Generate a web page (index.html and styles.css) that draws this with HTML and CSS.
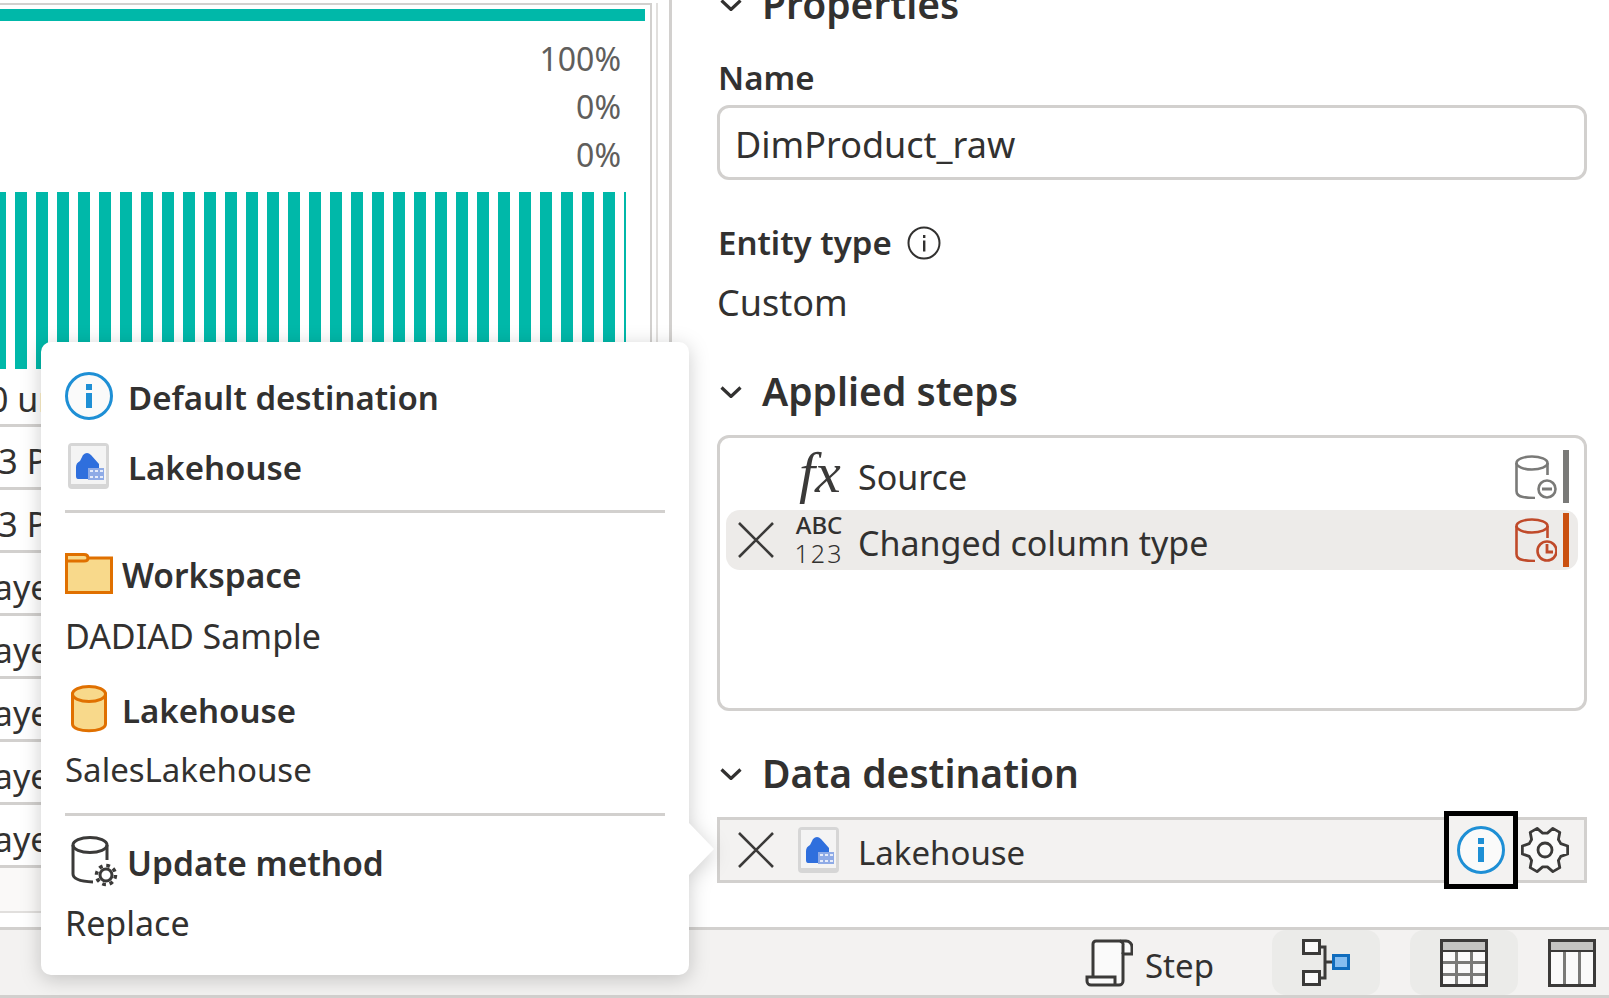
FILE: index.html
```html
<!DOCTYPE html>
<html lang="en">
<head>
    <meta charset="UTF-8">
    <meta name="viewport" content="width=device-width, initial-scale=1.0">
    <title>DimProduct_raw - Power Query</title>
    <link rel="stylesheet" href="styles.css">
</head>
<body>
    <svg class="icon-defs" xmlns="http://www.w3.org/2000/svg">
        <symbol id="i-lakehouse" viewBox="0 0 41 46">
            <rect x="0" y="0" width="41" height="46" rx="4" fill="#d6d6d6"/>
            <rect x="3" y="3" width="35" height="38" fill="#f4f4f4"/>
            <path d="M8 24 Q8 20 12 18 L15 12 Q19 8 23 12 L31 21 V36 H10 Q8 36 8 33 Z" fill="#2f6fdd"/>
            <rect x="20" y="25" width="16" height="12" fill="#8fabe6"/>
            <path d="M22 28h3M27 28h3M32 28h3M22 34h3M27 34h3M32 34h3" stroke="#e6ecfa" stroke-width="2"/>
        </symbol>
        <symbol id="i-info" viewBox="0 0 48 48">
            <circle cx="24" cy="24" r="22.5" fill="#fafafa" stroke="#1e8fd5" stroke-width="3"/>
            <rect x="21" y="12" width="6" height="6" fill="#1e8fd5"/>
            <rect x="21" y="21" width="6" height="15" fill="#1e8fd5"/>
        </symbol>
        <symbol id="i-cross" viewBox="0 0 36 36">
            <path d="M1 1 L35 35 M35 1 L1 35" stroke="#3b3a39" stroke-width="2.6" fill="none"/>
        </symbol>
        <symbol id="i-chevron" viewBox="0 0 22 12">
            <path d="M1.5 1.5 L11 10.5 L20.5 1.5" stroke="#323130" stroke-width="3.2" fill="none"/>
        </symbol>
    </svg>

    <main class="workspace">
        <section class="preview">
            <div class="column">
                <div class="quality-bar"></div>
                <ul class="stats">
                    <li>100%</li>
                    <li>0%</li>
                    <li>0%</li>
                </ul>
                <div class="stripes"></div>
                <div class="cell cell-units">100 unique</div>
                <div class="cell cell-time">2023 PM</div>
                <div class="cell cell-time">2023 PM</div>
                <div class="cell cell-layer">Layer</div>
                <div class="cell cell-layer">Layer</div>
                <div class="cell cell-layer">Layer</div>
                <div class="cell cell-layer">Layer</div>
                <div class="cell cell-layer">Layer</div>
                <div class="cell-spacer"></div>
            </div>
        </section>

        <aside class="settings">
            <h2 class="section-title section-title-first">
                <svg class="chevron"><use href="#i-chevron"/></svg>Properties
            </h2>
            <div class="field-label">Name</div>
            <div class="name-input">DimProduct_raw</div>
            <div class="field-label field-label-entity">
                Entity type
                <svg class="hint" viewBox="0 0 34 34">
                    <circle cx="17" cy="17" r="15.5" fill="none" stroke="#323130" stroke-width="2"/>
                    <rect x="16" y="9" width="2.4" height="3" fill="#323130"/>
                    <rect x="16" y="14.5" width="2.4" height="11" fill="#323130"/>
                </svg>
            </div>
            <div class="field-value">Custom</div>

            <h2 class="section-title">
                <svg class="chevron"><use href="#i-chevron"/></svg>Applied steps
            </h2>
            <div class="steps">
                <div class="step step-source">
                    <span class="step-cross"></span>
                    <span class="step-fx">fx</span>
                    <span class="step-name">Source</span>
                    <svg class="step-state" viewBox="0 0 42 44">
                        <g fill="none" stroke="#7a7a78" stroke-width="2.6">
                            <ellipse cx="17" cy="8" rx="15.5" ry="6.5"/>
                            <path d="M1.5 8 V36 Q1.5 41 8 42 Q13 43 20 43 M32.5 8 V20"/>
                            <circle cx="32" cy="34" r="8.5"/>
                        </g>
                        <rect x="27" y="32.5" width="10" height="3" fill="#7a7a78"/>
                    </svg>
                    <span class="step-flag"></span>
                </div>
                <div class="step step-selected">
                    <svg class="step-cross"><use href="#i-cross"/></svg>
                    <span class="step-type"><b>ABC</b><i>123</i></span>
                    <span class="step-name">Changed column type</span>
                    <svg class="step-state" viewBox="0 0 42 44">
                        <g fill="none" stroke="#c04a2a" stroke-width="2.6">
                            <ellipse cx="17" cy="8" rx="15.5" ry="6.5"/>
                            <path d="M1.5 8 V36 Q1.5 41 8 42 Q13 43 20 43 M32.5 8 V20"/>
                            <circle cx="32" cy="33" r="9.5"/>
                            <path d="M32 26 V34 H38" stroke-width="2.8"/>
                        </g>
                    </svg>
                    <span class="step-flag step-flag-warn"></span>
                </div>
            </div>

            <h2 class="section-title section-title-dest">
                <svg class="chevron"><use href="#i-chevron"/></svg>Data destination
            </h2>
            <div class="destination">
                <svg class="step-cross"><use href="#i-cross"/></svg>
                <svg class="dest-lakehouse"><use href="#i-lakehouse"/></svg>
                <span class="dest-name">Lakehouse</span>
                <button class="dest-info"><svg class="dest-info-icon"><use href="#i-info"/></svg></button>
                <svg class="dest-gear" viewBox="0 0 48 48">
                    <path d="M39.76 17.63 46.65 20.01 46.65 27.99 39.76 30.37 37.4 34.47 38.78 41.62 31.87 45.61 26.37 40.83 21.63 40.83 16.13 45.61 9.22 41.62 10.6 34.47 8.24 30.37 1.35 27.99 1.35 20.01 8.24 17.63 10.6 13.53 9.22 6.38 16.13 2.39 21.63 7.17 26.37 7.17 31.87 2.39 38.78 6.38 37.4 13.53Z" fill="#fafafa" stroke="#3b3a39" stroke-width="2.8" stroke-linejoin="round"/>
                    <circle cx="24" cy="24" r="7" fill="none" stroke="#3b3a39" stroke-width="2.8"/>
                </svg>
            </div>
        </aside>
    </main>

    <footer class="status-bar">
        <svg class="status-icon" viewBox="0 0 48 48">
            <path d="M8 38 V5 a3 3 0 0 1 3-3 H41 a6 6 0 0 1 6 6 V15 H38 V42 a4 4 0 0 1 -4 4 H6 a4 4 0 0 1 -4 -4 V38 H30 V46" fill="#fafafa" stroke="#3b3a39" stroke-width="3"/>
            <path d="M38 15 V7 a4 4 0 0 0 -3-5" fill="none" stroke="#3b3a39" stroke-width="3"/>
        </svg>
        <span class="status-step">Step</span>
        <span class="toggle toggle-diagram">
            <svg class="status-icon" viewBox="0 0 48 48">
                <path d="M17 8 H23 V39 H17 M23 23 H31" fill="none" stroke="#3b3a39" stroke-width="3"/>
                <rect x="1.5" y="1.5" width="16" height="13" fill="#fafafa" stroke="#3b3a39" stroke-width="3"/>
                <rect x="1.5" y="32.5" width="16" height="13" fill="#fafafa" stroke="#3b3a39" stroke-width="3"/>
                <rect x="31.5" y="16.5" width="15" height="13" fill="#85bdf0" stroke="#0f6cbd" stroke-width="3"/>
            </svg>
        </span>
        <span class="toggle toggle-table">
            <svg class="status-icon" viewBox="0 0 48 48">
                <rect x="1.5" y="1.5" width="45" height="45" fill="#fafafa"/>
                <rect x="1.5" y="1.5" width="45" height="10" fill="#c4c4c2"/>
                <path d="M1.5 23.5 H46.5 M1.5 35.5 H46.5 M16.5 12 V46 M31.5 12 V46" stroke="#7a7a78" stroke-width="3"/>
                <path d="M1.5 12 H46.5" stroke="#3b3a39" stroke-width="2"/>
                <rect x="1.5" y="1.5" width="45" height="45" fill="none" stroke="#3b3a39" stroke-width="3"/>
            </svg>
        </span>
        <svg class="status-icon status-columns" viewBox="0 0 48 48">
            <rect x="1.5" y="1.5" width="45" height="45" fill="#fafafa"/>
            <rect x="1.5" y="1.5" width="45" height="10" fill="#c4c4c2"/>
            <path d="M16.5 12 V46 M31.5 12 V46" stroke="#7a7a78" stroke-width="3"/>
            <path d="M1.5 12 H46.5" stroke="#3b3a39" stroke-width="2"/>
            <rect x="1.5" y="1.5" width="45" height="45" fill="none" stroke="#3b3a39" stroke-width="3"/>
        </svg>
    </footer>

    <div class="popover">
        <div class="pop-row pop-row-default">
            <svg class="pop-info"><use href="#i-info"/></svg>
            <span class="pop-title">Default destination</span>
        </div>
        <div class="pop-row pop-row-kind">
            <svg class="pop-lakehouse"><use href="#i-lakehouse"/></svg>
            <span class="pop-title">Lakehouse</span>
        </div>
        <hr class="pop-rule pop-rule-first">
        <div class="pop-row">
            <svg class="pop-folder" viewBox="0 0 48 41">
                <path d="M1.5 5 H46.5 V39.5 H1.5 Z" fill="#f8d98b" stroke="#e07000" stroke-width="3"/>
                <path d="M1.5 8 V1.5 H19 Q23 1.5 23 5 Q23 8 19 8 Z" fill="#f8d98b" stroke="#e07000" stroke-width="3"/>
            </svg>
            <span class="pop-title pop-title-workspace">Workspace</span>
        </div>
        <div class="pop-value pop-value-workspace">DADIAD Sample</div>
        <div class="pop-row pop-row-lake">
            <svg class="pop-cylinder" viewBox="0 0 36 48">
                <path d="M1.5 9 V39 C1.5 48 34.5 48 34.5 39 V9 Z" fill="#f8d98b" stroke="#e07000" stroke-width="3"/>
                <ellipse cx="18" cy="9" rx="16.5" ry="7.5" fill="#f8d98b" stroke="#e07000" stroke-width="3"/>
            </svg>
            <span class="pop-title">Lakehouse</span>
        </div>
        <div class="pop-value pop-value-lake">SalesLakehouse</div>
        <hr class="pop-rule pop-rule-second">
        <div class="pop-row pop-row-update">
            <svg class="pop-update" viewBox="0 0 47 51">
                <g fill="none" stroke="#3b3a39" stroke-width="3">
                    <ellipse cx="19" cy="9" rx="17" ry="7.5"/>
                    <path d="M2 9 V38 Q2 45 22 46 M36 9 V24"/>
                    <circle cx="35" cy="39" r="6"/>
                </g>
                <circle cx="35" cy="39" r="9.5" fill="none" stroke="#3b3a39" stroke-width="3.5" stroke-dasharray="3.7 3.76"/>
            </svg>
            <span class="pop-title pop-title-update">Update method</span>
        </div>
        <div class="pop-value pop-value-update">Replace</div>
    </div>
</body>
</html>
```

FILE: styles.css
```css
* {
    box-sizing: border-box;
}
body {
    margin: 0;
    height: 998px;
    overflow: hidden;
    background: #fff;
    color: #323130;
    font-family: "Noto Sans", "Open Sans", sans-serif;
    font-size: 34px;
}
.icon-defs {
    display: none;
}

.workspace {
    display: flex;
    height: 927px;
    overflow: hidden;
}

/* data preview on the left */
.preview {
    flex: none;
    width: 672px;
    border-right: 3px solid #d2d0ce;
}
.column {
    width: 652px;
    height: 100%;
    padding-top: 4px;
    margin-top: 3px;
    border-top: 2px solid #d2d0ce;
    border-right: 2px solid #d2d0ce;
    box-shadow: 4px 0 0 #fff, 6px 0 0 #e1dfdd;
    overflow: hidden;
}
.quality-bar {
    width: 645px;
    height: 12px;
    background: #00b8a9;
}
.stats {
    list-style: none;
    margin: 14px 0 13px;
    padding: 0 29px 0 0;
    text-align: right;
    color: #605e5c;
    font-size: 32px;
    line-height: 48px;
}
.stripes {
    width: 626px;
    height: 177px;
    background: linear-gradient(90deg, #00b8a9 12px, transparent 12px) -6px 0 / 21px 100%;
}
.cell {
    height: 63px;
    line-height: 68px;
    white-space: nowrap;
    border-bottom: 3px solid #d2d0ce;
}
.cell-units {
    height: 58px;
    line-height: 60px;
    text-indent: -50px;
}
.cell-time {
    text-indent: -60px;
}
.cell-layer {
    text-indent: -24px;
}
.cell-spacer {
    height: 45px;
    background: #faf9f8;
    border-bottom: 2px solid #e1dfdd;
}

/* query settings on the right */
.settings {
    flex: 1;
    padding: 0 22px 0 45px;
}
.section-title {
    display: flex;
    align-items: center;
    height: 54px;
    margin: 0;
    padding-bottom: 3px;
    font-size: 39px;
    font-weight: 600;
}
.section-title-first {
    margin-top: -22px;
}
.chevron {
    width: 22px;
    height: 12px;
    margin: 3px 20px 0 3px;
}
.field-label {
    height: 44px;
    line-height: 44px;
    margin: 24px 0 5px 1px;
    font-size: 33px;
    font-weight: 600;
    display: flex;
    align-items: center;
}
.field-label-entity {
    margin-top: 41px;
    margin-bottom: 0;
}
.hint {
    width: 34px;
    height: 34px;
    margin-left: 15px;
}
.field-value {
    height: 44px;
    line-height: 44px;
    margin: 16px 0 40px;
    font-size: 36px;
}
.name-input {
    height: 75px;
    line-height: 74px;
    padding-left: 15px;
    font-size: 36px;
    border: 3px solid #d2d0ce;
    border-radius: 12px;
}
.steps {
    height: 276px;
    margin-top: 16px;
    padding: 12px 6px;
    border: 3px solid #d2d0ce;
    border-radius: 12px;
}
.step {
    display: flex;
    align-items: center;
    height: 60px;
    padding-left: 12px;
    border-radius: 14px;
}
.step-source {
    height: 53px;
    margin-bottom: 7px;
}
.step-selected {
    background: #edebe9;
}
.step-cross {
    flex: none;
    width: 36px;
    height: 36px;
}
.step-fx {
    flex: none;
    width: 45px;
    margin: 0 14px 8px 25px;
    font-family: "Liberation Serif", serif;
    font-style: italic;
    font-size: 58px;
    line-height: 52px;
    color: #3b3a39;
}
.step-type {
    flex: none;
    width: 50px;
    margin: -2px 14px 0 20px;
    display: flex;
    flex-direction: column;
    font-size: 24px;
    line-height: 28px;
    text-align: center;
}
.step-type b {
    font-weight: 500;
}
.step-type i {
    font-style: normal;
    font-weight: 300;
    font-size: 25px;
    letter-spacing: 2px;
}
.step-name {
    flex: 1;
}
.step-selected .step-name {
    padding-top: 5px;
}
.step-state {
    flex: none;
    width: 42px;
    height: 44px;
    margin-right: 6px;
}
.step-flag {
    flex: none;
    width: 6px;
    height: 53px;
    margin-right: 9px;
    background: #7a7a78;
}
.step-flag-warn {
    height: 54px;
    background: #ca5010;
}
.section-title-dest {
    margin-top: 36px;
}
.destination {
    display: flex;
    align-items: center;
    height: 66px;
    margin-top: 16px;
    padding: 0 15px 0 18px;
    background: #f3f2f1;
    border: 3px solid #d2d0ce;
}
.dest-lakehouse {
    flex: none;
    width: 41px;
    height: 46px;
    margin-left: 24px;
    filter: blur(0.6px);
}
.dest-name {
    flex: 1;
    margin-left: 19px;
    padding-top: 4px;
    font-size: 33px;
}
.dest-info {
    flex: none;
    display: flex;
    align-items: center;
    justify-content: center;
    width: 74px;
    height: 78px;
    padding: 0;
    background: #f3f2f1;
    border: 5px solid #000;
}
.dest-info-icon {
    width: 48px;
    height: 48px;
}
.dest-gear {
    flex: none;
    width: 48px;
    height: 48px;
    margin-left: 3px;
}

/* bottom bar */
.status-bar {
    display: flex;
    align-items: center;
    height: 71px;
    background: #f3f2f1;
    border-top: 3px solid #d2d0ce;
    border-bottom: 3px solid #d2d0ce;
    padding-left: 1085px;
}
.status-icon {
    flex: none;
    width: 48px;
    height: 48px;
}
.status-step {
    width: 126px;
    margin-left: 12px;
    padding-top: 5px;
    font-size: 33px;
}
.toggle {
    flex: none;
    display: flex;
    align-items: center;
    justify-content: center;
    width: 108px;
    height: 65px;
    background: #ebebe9;
    border-radius: 14px;
}
.toggle-diagram {
    margin-left: 1px;
}
.toggle-table {
    margin-left: 30px;
}
.status-columns {
    margin-left: 30px;
}

/* callout over the data preview */
.popover {
    position: absolute;
    left: 41px;
    top: 342px;
    width: 648px;
    height: 633px;
    padding: 30px 24px 0;
    background: #fff;
    border-radius: 10px;
    filter: drop-shadow(0 4px 10px rgba(0, 0, 0, 0.2));
}
.popover::after {
    content: "";
    position: absolute;
    left: 100%;
    top: 481px;
    width: 25px;
    height: 52px;
    background: #fff;
    clip-path: polygon(0 0, 100% 50%, 0 100%);
}
.pop-row {
    display: flex;
    align-items: center;
}
.pop-title {
    font-size: 33px;
    font-weight: 600;
    line-height: 44px;
    padding-top: 4px;
}
.pop-title-workspace {
    font-size: 33.5px;
}
.pop-title-update {
    font-size: 33.5px;
    padding-top: 3px;
}
.pop-row-kind {
    margin-top: 22px;
}
.pop-info {
    width: 48px;
    height: 48px;
    margin-right: 15px;
}
.pop-lakehouse {
    width: 41px;
    height: 46px;
    margin: 0 19px 0 3px;
    filter: blur(0.6px);
}
.pop-folder {
    width: 48px;
    height: 41px;
    margin-right: 9px;
}
.pop-cylinder {
    width: 36px;
    height: 48px;
    margin: 0 15px 0 6px;
}
.pop-update {
    width: 47px;
    height: 51px;
    margin: 0 9px 0 6px;
}
.pop-rule {
    height: 3px;
    margin: 0;
    border: 0;
    background: #d2d0ce;
}
.pop-rule-first {
    margin: 20px 0 36px;
}
.pop-rule-second {
    margin: 21px 0 20px;
}
.pop-value {
    line-height: 44px;
}
.pop-value-workspace {
    margin: 17px 0 27px;
}
.pop-value-lake {
    margin-top: 15px;
    font-size: 33px;
}
.pop-value-update {
    margin-top: 14px;
}
```
